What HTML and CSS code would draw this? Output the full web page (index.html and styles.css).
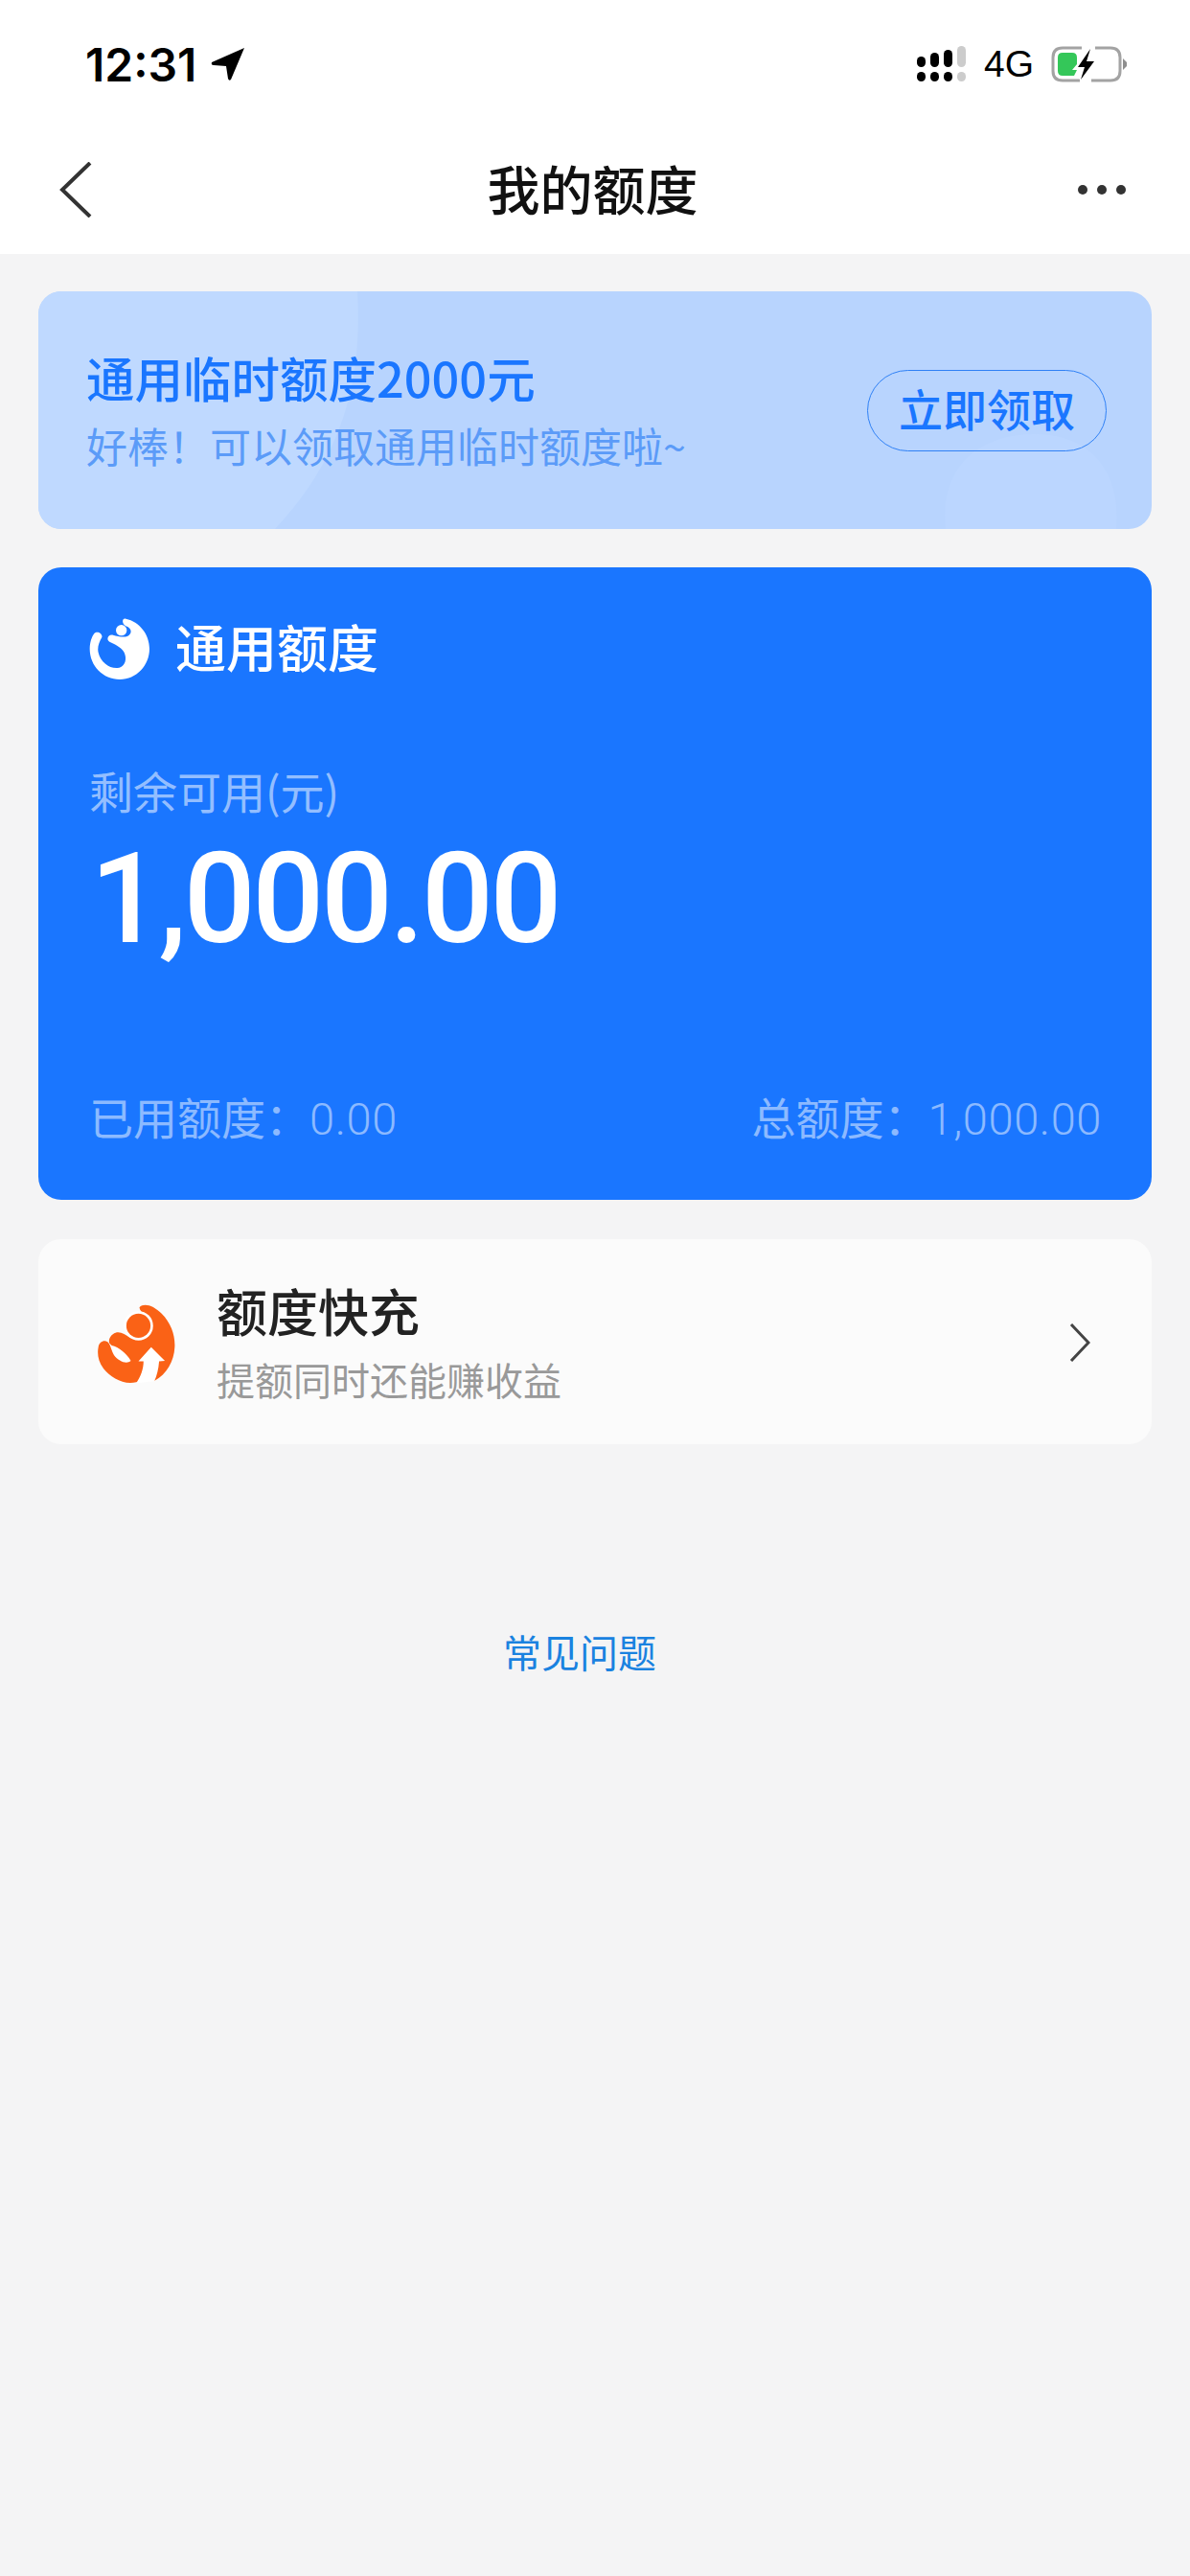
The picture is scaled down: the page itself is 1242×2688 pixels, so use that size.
FILE: index.html
```html
<!DOCTYPE html>
<html lang="zh-CN">
<head>
    <meta charset="UTF-8">
    <meta name="viewport" content="width=device-width, initial-scale=1.0">
    <title>我的额度</title>
    <link rel="stylesheet" href="styles.css">
</head>
<body>
    <div class="statusBar">
        <div class="time">
            <span>12:31</span>
            <svg class="arrow" width="36" height="36" viewBox="0 0 36 36"><path d="M35 1 L1 16 Q0 19 3 19 L16 20 L18 33 Q19 36 21 34 Z" fill="#000"/></svg>
        </div>
        <div class="status">
            <svg class="signal" width="52" height="38" viewBox="0 0 52 38">
                <rect x="0" y="11" width="9" height="11" rx="4.5" fill="#000"/>
                <rect x="14" y="7" width="9" height="15" rx="4.5" fill="#000"/>
                <rect x="28" y="4" width="9" height="18" rx="4.5" fill="#000"/>
                <rect x="42" y="0" width="9" height="22" rx="4.5" fill="#ccc"/>
                <rect x="0" y="27" width="9" height="10" rx="4.5" fill="#000"/>
                <rect x="14" y="27" width="9" height="10" rx="4.5" fill="#000"/>
                <rect x="28" y="27" width="9" height="10" rx="4.5" fill="#000"/>
                <rect x="42" y="27" width="9" height="10" rx="4.5" fill="#ccc"/>
            </svg>
            <span class="net">4G</span>
            <svg class="battery" width="80" height="38" viewBox="0 0 80 38">
                <path d="M32 2 H12 Q2 2 2 12 V26 Q2 36 12 36 H30 M42 36 H62 Q72 36 72 26 V12 Q72 2 62 2 H46" fill="none" stroke="#a3a3a3" stroke-width="3"/>
                <path d="M75 13 L79 17 V21 L75 25 Z" fill="#8e8e8e"/>
                <path d="M12 7 H22 Q27 7 27 12 V19 L22 25 H27 L24 31 H12 Q7 31 7 26 V12 Q7 7 12 7 Z" fill="#34c759"/>
                <path d="M41 3 L28 22 H35 L31 35 L45 16 H37 Z" fill="#000" stroke="#fff" stroke-width="3" paint-order="stroke"/>
            </svg>
        </div>
    </div>

    <div class="nav">
        <svg class="back" width="34" height="58" viewBox="0 0 34 58"><path d="M32 1 L3 29 L32 57" fill="none" stroke="#333" stroke-width="4"/></svg>
        <h1>我的额度</h1>
        <div class="more"><i></i><i></i><i></i></div>
    </div>

    <div class="content">
        <div class="banner">
            <svg class="bannerBg" width="1162" height="248" viewBox="0 0 1162 248">
                <path d="M0 0 H333 C338 90 320 170 247 248 H0 Z" fill="#bfd9ff"/>
                <path d="M947 248 C940 190 975 149 1040 149 C1100 149 1130 190 1125 248 Z" fill="#bbd6ff"/>
            </svg>
            <div class="bannerText">
                <div class="bannerTitle">通用临时额度2000元</div>
                <div class="bannerSub">好棒！可以领取通用临时额度啦~</div>
            </div>
            <button class="btn">立即领取</button>
        </div>

        <div class="quota">
            <div class="quotaHead">
                <svg width="64" height="64" viewBox="98 74 190 192"><path d="M212 76 C255 85 286 125 286 170 C286 222 245 266 193 266 C141 266 99 224 99 170 C99 150 105 133 113 122 C122 112 140 122 137 134 C128 150 122 165 126 182 C133 212 160 232 186 230 C210 228 218 200 205 178 C195 164 178 155 161 148 C150 142 155 124 172 127 C188 131 205 136 218 130 C232 122 232 106 212 99 C198 92 200 72 212 76 Z" fill="#fff"/><circle cx="198" cy="112" r="17" fill="#fff"/></svg>
                <span>通用额度</span>
            </div>
            <div class="quotaLabel">剩余可用(元)</div>
            <div class="amount">1,000.00</div>
            <div class="quotaFoot">
                <span>已用额度：<b>0.00</b></span>
                <span>总额度：<b>1,000.00</b></span>
            </div>
        </div>

        <div class="charge">
            <svg class="chargeIcon" width="81" height="90" viewBox="94 58 244 270">
                <path d="M225 70 C240 55 270 65 295 90 C325 120 338 160 336 195 C334 240 310 280 274 300 L215 305 C175 315 135 290 112 262 C95 240 92 215 96 195 C100 172 125 170 132 188 C125 172 135 155 150 150 C165 145 180 155 195 165 L260 105 C250 92 228 90 225 70 Z" fill="#fa6216"/>
                <path d="M128 180 L138 190 C160 195 185 215 198 238 C185 250 160 240 145 220 C138 208 136 195 128 180 Z" fill="#fff"/>
                <circle cx="222" cy="128" r="46" fill="#fff"/>
                <circle cx="222" cy="128" r="38" fill="#fa6216"/>
                <path d="M262 195 L305 238 L287 240 C285 265 280 285 272 302 L215 308 C228 290 238 265 238 240 L222 240 Z" fill="#fff"/>
            </svg>
            <div class="chargeText">
                <div class="chargeTitle">额度快充</div>
                <div class="chargeSub">提额同时还能赚收益</div>
            </div>
            <svg class="go" width="22" height="40" viewBox="0 0 22 40"><path d="M2 1 L20 20 L2 39" fill="none" stroke="#444" stroke-width="3"/></svg>
        </div>

        <a class="faq">常见问题</a>
    </div>
</body>
</html>
```

FILE: styles.css
```css
html,body{
    height: 100%;
}
body{
    margin: 0;
    background-color: #f4f4f5;
    font-family: "Noto Sans CJK SC", Roboto, sans-serif;
}
.statusBar{
    height: 130px;
    box-sizing: border-box;
    padding: 4px 65px 0 89px;
    background-color: #fff;
    display: flex;
    align-items: center;
    justify-content: space-between;
}
.time{
    display: flex;
    align-items: center;
    gap: 15px;
    font-family: Inter, sans-serif;
    font-size: 48px;
    font-weight: 600;
    color: #000;
}
.status{
    display: flex;
    align-items: center;
    gap: 18px;
}
.net{
    font-family: "Liberation Sans", sans-serif;
    font-size: 39px;
    color: #000;
}
.nav{
    height: 135px;
    background-color: #fff;
    display: flex;
    align-items: center;
    justify-content: space-between;
    padding: 0 67px 0 62px;
}
.back{
    margin-right: 16px;
}
.nav h1{
    margin: 0 0 6px;
    font-size: 55px;
    font-weight: 500;
    color: #111;
}
.more{
    display: flex;
    gap: 10px;
    width: 50px;
}
.more i{
    width: 10px;
    height: 10px;
    border-radius: 50%;
    background-color: #333;
}
.content{
    padding: 39px 40px;
}
.banner{
    position: relative;
    overflow: hidden;
    height: 248px;
    border-radius: 24px;
    background-color: #b8d4fe;
    display: flex;
    align-items: center;
    justify-content: space-between;
    padding: 0 47px 0 50px;
    box-sizing: border-box;
}
.bannerBg{
    position: absolute;
    left: 0;
    top: 0;
}
.bannerText,.banner .btn{
    position: relative;
}
.bannerText{
    padding-top: 2px;
}
.bannerTitle{
    font-size: 50.5px;
    font-weight: 500;
    line-height: 70px;
    color: #1a76ff;
}
.bannerSub{
    font-size: 43px;
    line-height: 72px;
    color: #5b9bf8;
}
.btn{
    width: 250px;
    height: 85px;
    padding: 0 0 6px;
    border: 1.5px solid #2f80f5;
    border-radius: 43px;
    background: none;
    color: #1a76ff;
    font-family: inherit;
    font-size: 46px;
    font-weight: 500;
}
.quota{
    height: 660px;
    margin-top: 40px;
    border-radius: 24px;
    background-color: #1a76ff;
    box-sizing: border-box;
    padding: 53px 52px 54px 53px;
    display: flex;
    flex-direction: column;
    color: #fff;
}
.quotaHead{
    display: flex;
    align-items: center;
    gap: 26px;
    height: 64px;
    font-size: 53px;
    font-weight: 500;
}
.quotaHead span{
    padding-bottom: 6px;
}
.quotaLabel{
    margin-top: 85px;
    font-size: 46px;
    line-height: 60px;
    color: rgba(255,255,255,0.55);
}
.amount{
    margin-top: 14px;
    padding-left: 1px;
    font-family: Roboto, sans-serif;
    font-size: 132px;
    font-weight: 500;
    letter-spacing: -3.4px;
    line-height: 140px;
}
.quotaFoot{
    margin-top: auto;
    display: flex;
    justify-content: space-between;
    font-size: 46px;
    line-height: 60px;
    color: rgba(255,255,255,0.5);
}
.quotaFoot b{
    font-family: Roboto, sans-serif;
    font-size: 47px;
    font-weight: 300;
    letter-spacing: 0.6px;
}
.charge{
    height: 214px;
    margin-top: 41px;
    border-radius: 24px;
    background-color: #fbfbfb;
    box-sizing: border-box;
    padding: 0 64px 0 62px;
    display: flex;
    align-items: center;
}
.chargeIcon{
    margin-top: 10px;
}
.chargeText{
    flex: 1;
    margin-left: 43px;
}
.chargeTitle{
    font-size: 53px;
    font-weight: 500;
    line-height: 72px;
    margin-top: -2px;
    color: #222;
}
.chargeSub{
    font-size: 40px;
    line-height: 56px;
    margin-top: 8px;
    color: #999;
}
.go{
    margin-top: 2px;
}
.faq{
    display: block;
    margin-top: 186px;
    padding-right: 32px;
    text-align: center;
    font-size: 40px;
    line-height: 60px;
    color: #1a82e0;
}
```
